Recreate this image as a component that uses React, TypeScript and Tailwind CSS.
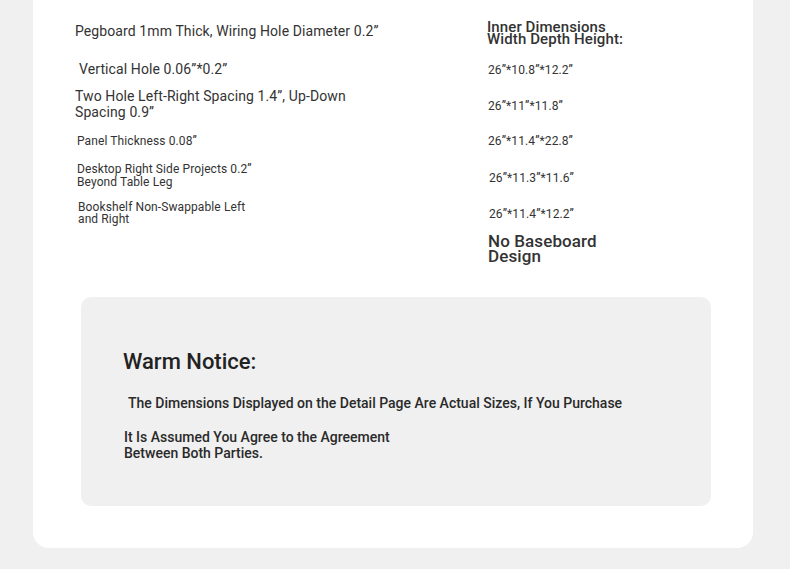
import React from "react";

const sizes = [
  { text: "26”*10.8”*12.2”", cls: "mt-[18px] ml-px" },
  { text: "26”*11”*11.8”", cls: "mt-[22px] ml-px" },
  { text: "26”*11.4”*22.8”", cls: "mt-[21px] ml-px" },
  { text: "26”*11.3”*11.6”", cls: "mt-[23px] ml-[2px]" },
  { text: "26”*11.4”*12.2”", cls: "mt-[22px] ml-[2px]" },
];

const App: React.FC = () => {
  return (
    <div
      className="min-h-[569px] w-[790px] bg-[#f0f0f0] pl-[33px] text-[#333]"
      style={{ fontFamily: "Roboto, 'Liberation Sans', sans-serif" }}
    >
      <div className="w-[720px] rounded-b-[16px] bg-white pb-[42px]">
        <div className="grid grid-cols-[412px_1fr] pl-[42px]">
          {/* left specs */}
          <div className="flex flex-col tracking-[0.1px]">
            <p className="mt-[23px] text-[14px] leading-[16px]">
              Pegboard 1mm Thick, Wiring Hole Diameter 0.2”
            </p>
            <p className="ml-[4px] mt-[22px] text-[14px] leading-[16px]">
              Vertical Hole 0.06”*0.2”
            </p>
            <p className="mt-[11px] w-[300px] text-[14px] leading-[16px]">
              Two Hole Left-Right Spacing 1.4”, Up-Down Spacing 0.9”
            </p>
            <p className="ml-[2px] mt-[14px] text-[12px] leading-[14px]">
              Panel Thickness 0.08”
            </p>
            <p className="ml-[2px] mt-[15px] w-[185px] text-[12px] leading-[13px]">
              Desktop Right Side Projects 0.2” Beyond Table Leg
            </p>
            <p className="ml-[3px] mt-[12px] w-[175px] text-[12px] leading-[12px]">
              Bookshelf Non-Swappable Left and Right
            </p>
          </div>

          {/* right specs */}
          <div className="flex flex-col tracking-[0.1px]">
            <p className="mt-[21px] w-[140px] text-[15px] font-medium leading-[12px]">
              Inner Dimensions Width Depth Height:
            </p>
            {sizes.map((s) => (
              <p key={s.text} className={`${s.cls} text-[12px] leading-[14px]`}>
                {s.text}
              </p>
            ))}
            <p className="ml-px mt-[13px] w-[130px] text-[17px] font-medium leading-[15px]">
              No Baseboard Design
            </p>
          </div>
        </div>

        <div className="ml-[48px] mt-[33px] h-[209px] w-[630px] rounded-[10px] bg-[#f0f0f0] pl-[42px] text-[#222]">
          <h2 className="pt-[51px] text-[22px] font-medium leading-[28px]">
            Warm Notice:
          </h2>
          <p className="ml-[5px] mt-[19px] text-[14px] font-medium leading-[16px] text-[#2a2a2a]">
            The Dimensions Displayed on the Detail Page Are Actual Sizes, If You Purchase
          </p>
          <p className="ml-px mt-[18px] w-[285px] text-[14px] font-medium leading-[16px] text-[#2a2a2a]">
            It Is Assumed You Agree to the Agreement Between Both Parties.
          </p>
        </div>
      </div>
    </div>
  );
};

export default App;
